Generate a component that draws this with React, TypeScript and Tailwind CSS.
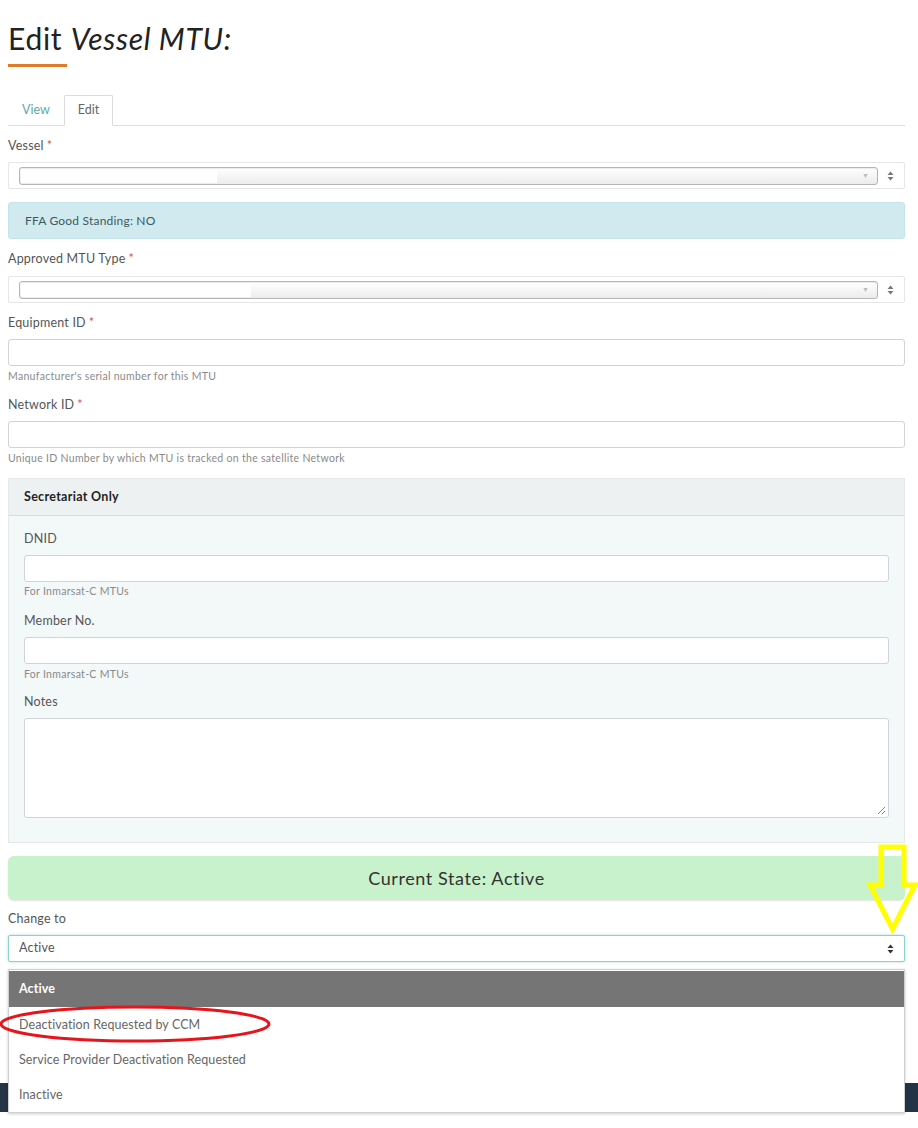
import React from 'react';

const Star = () => <span className="ml-[3px] text-[#d9534f]">*</span>;

const UpDown = ({ dark }: { dark?: boolean }) => (
    <svg width="7" height="10" viewBox="0 0 7 10" className="shrink-0">
        <path d="M3.5 0.5 L6.5 4 H0.5 Z" fill={dark ? '#333' : '#777'} />
        <path d="M3.5 9.5 L6.5 6 H0.5 Z" fill={dark ? '#333' : '#777'} />
    </svg>
);

const Label = ({ text, required, className = '' }: { text: string; required?: boolean; className?: string }) => (
    <div className={`h-[18px] flex items-center text-[12.5px] tracking-[0.2px] text-[#555] ${className}`}>
        {text}
        {required && <Star />}
    </div>
);

const Help = ({ text, className = '' }: { text: string; className?: string }) => (
    <div className={`h-[12px] flex items-center text-[10.5px] tracking-[0.3px] text-[#8a8a8a] ${className}`}>{text}</div>
);

const Input = ({ className = '' }: { className?: string }) => (
    <div className={`h-[27px] bg-white border border-[#cfd4d8] rounded-[3px] ${className}`} />
);

// select rendered by a plugin: faded inner box + native arrows beside it
const PluginSelect = ({ redact }: { redact: number }) => (
    <div className="h-[27px] border border-[#e6e6e6] rounded-[2px] bg-white flex items-center pl-[10px] pr-[10px] gap-[9px]">
        <div className="flex-1 h-[18px] rounded-[3px] border border-[#b5b5b5] bg-gradient-to-b from-white to-[#ececec] flex items-center pr-[8px] shadow-[inset_0_1px_1px_rgba(0,0,0,0.08)]">
            <div className="h-[14px] bg-white ml-[1px]" style={{ width: redact }} />
            <div className="flex-1" />
            <span className="text-[7px] text-[#bbb]">▼</span>
        </div>
        <UpDown />
    </div>
);

export default function App() {
    return (
        <div className="relative min-h-[1128px] bg-white font-['Lato',sans-serif] overflow-hidden">
            <div className="pl-2 pr-[13px]">
                <h1 className="pt-[21px] text-[30px] leading-[34px] text-[#222] tracking-[0.7px]">
                    Edit <span className="italic">Vessel MTU:</span>
                </h1>
                <div className="mt-[9px] w-[59px] h-[3px] bg-[#e07b2a]" />

                {/* tabs */}
                <div className="mt-[28px] flex border-b border-[#dcdcdc] h-[31px]">
                    <div className="px-[14px] flex items-center text-[12.5px] text-[#5fa8a8]">View</div>
                    <div className="px-[13px] flex items-center text-[12.5px] text-[#666] border border-[#dcdcdc] border-b-white -mb-px bg-white rounded-t-[2px]">
                        Edit
                    </div>
                </div>

                <Label text="Vessel" required className="mt-[11px]" />
                <div className="mt-[7px]">
                    <PluginSelect redact={196} />
                </div>

                <div className="mt-[13px] h-[37px] bg-[#d0eaf0] border border-[#c3e4ec] rounded-[3px] flex items-center pl-[16px] text-[12px] tracking-[0.2px] text-[#3c5a60]">
                    FFA Good Standing: NO
                </div>

                <Label text="Approved MTU Type" required className="mt-[11px]" />
                <div className="mt-[8px]">
                    <PluginSelect redact={230} />
                </div>

                <Label text="Equipment ID" required className="mt-[11px]" />
                <Input className="mt-[7px]" />
                <Help text="Manufacturer's serial number for this MTU" className="mt-[5px]" />

                <Label text="Network ID" required className="mt-[13px]" />
                <Input className="mt-[7px]" />
                <Help text="Unique ID Number by which MTU is tracked on the satellite Network" className="mt-[5px]" />

                {/* secretariat panel */}
                <div className="mt-[13px] border border-[#e4eaea] bg-[#f3f8f9]">
                    <div className="h-[37px] bg-[#edf1f1] border-b border-[#d6dcdc] flex items-center pl-[15px] text-[12.5px] tracking-[0.3px] font-bold text-[#1f1f1f]">
                        Secretariat Only
                    </div>
                    <div className="px-[15px] pb-[24px]">
                        <Label text="DNID" className="mt-[14px]" />
                        <Input className="mt-[7px]" />
                        <Help text="For Inmarsat-C MTUs" className="mt-[4px]" />

                        <Label text="Member No." className="mt-[14px]" />
                        <Input className="mt-[7px]" />
                        <Help text="For Inmarsat-C MTUs" className="mt-[5px]" />

                        <Label text="Notes" className="mt-[12px]" />
                        <div className="relative mt-[7px] h-[100px] bg-white border border-[#cfd4d8] rounded-[3px]">
                            <svg width="10" height="10" viewBox="0 0 10 10" className="absolute right-[2px] bottom-[2px]">
                                <path d="M9 2 L2 9 M9 6 L6 9" stroke="#888" strokeWidth="1" />
                            </svg>
                        </div>
                    </div>
                </div>

                <div className="mt-[13px] h-[44px] bg-[#c8f2cb] rounded-[6px] shadow-[0_1px_2px_rgba(0,0,0,0.12)] flex items-center justify-center text-[18px] tracking-[0.6px] text-[#333]">
                    Current State: Active
                </div>

                <Label text="Change to" className="mt-[10px]" />
                <div className="relative mt-[7px]">
                    <div className="h-[27px] bg-white border border-[#8fd0c8] rounded-[2px] shadow-[0_0_3px_rgba(120,200,190,0.6)] flex items-center pl-[10px] pr-[10px] text-[12.5px] tracking-[0.2px] text-[#555]">
                        <span className="flex-1">Active</span>
                        <UpDown dark />
                    </div>
                    {/* open option list */}
                    <div className="absolute left-0 right-0 top-[34px] z-10 bg-white border border-[#cfcfcf] shadow-[0_1px_3px_rgba(0,0,0,0.2)] pt-px text-[12.5px] tracking-[0.1px]">
                        <div className="h-[36px] bg-[#757575] text-white font-bold flex items-center pl-[10px]">Active</div>
                        <div className="h-[36px] flex items-center pl-[10px] text-[#666]">Deactivation Requested by CCM</div>
                        <div className="h-[35px] flex items-center pl-[10px] text-[#666]">Service Provider Deactivation Requested</div>
                        <div className="h-[34px] flex items-center pl-[10px] text-[#666]">Inactive</div>
                    </div>
                </div>
            </div>

            <div className="mt-[121px] h-[29px] bg-[#243447]" />

            {/* annotations */}
            <svg className="absolute left-0 top-0 pointer-events-none z-20" width="918" height="1128">
                <ellipse cx="135" cy="1024" rx="134" ry="17" fill="none" stroke="#e8141c" strokeWidth="3" />
                <path
                    d="M881 847 H904 V885 H915 L892.5 929 L870 885 H881 Z"
                    fill="none"
                    stroke="#ffff00"
                    strokeWidth="5"
                    strokeLinejoin="miter"
                />
            </svg>
        </div>
    );
}
